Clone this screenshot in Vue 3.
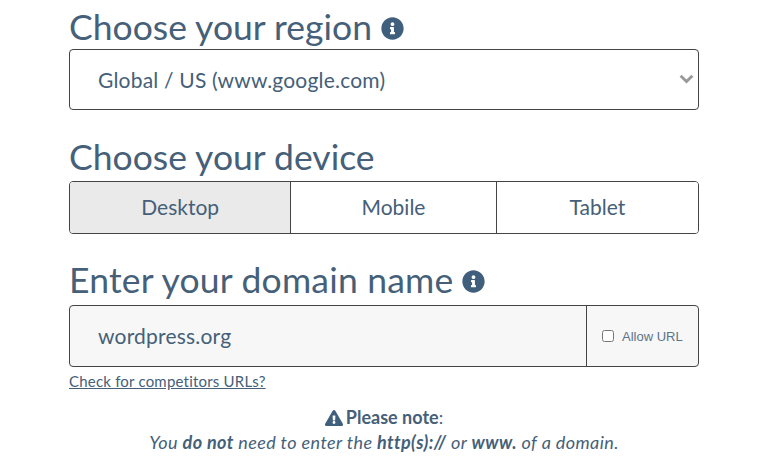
<script setup>
import { ref } from 'vue'
const devices = [
  { name: 'Desktop', grow: 221 },
  { name: 'Mobile', grow: 205 },
  { name: 'Tablet', grow: 202 }
]
const active = ref('Desktop')
const region = ref('Global / US (www.google.com)')
const domain = ref('wordpress.org')
</script>

<template>
  <main class="page">
    <h2 class="title first">
      Choose your region
      <svg class="info" viewBox="0 0 512 512"><path d="M256 8C119 8 8 119 8 256s111 248 248 248 248-111 248-248S393 8 256 8zm0 110c23 0 42 19 42 42s-19 42-42 42-42-19-42-42 19-42 42-42zm56 254c0 7-5 12-12 12h-88c-7 0-12-5-12-12v-24c0-7 5-12 12-12h12v-64h-12c-7 0-12-5-12-12v-24c0-7 5-12 12-12h64c7 0 12 5 12 12v100h12c7 0 12 5 12 12v24z"/></svg>
    </h2>
    <div class="select-wrap">
      <select v-model="region" class="select">
        <option>Global / US (www.google.com)</option>
      </select>
      <svg class="chevron" viewBox="0 0 14 9"><path d="M1.5 1.5 7 6.8l5.5-5.3" fill="none" stroke="#999" stroke-width="2.8"/></svg>
    </div>

    <h2 class="title second">Choose your device</h2>
    <div class="devices">
      <button
        v-for="d in devices"
        :key="d.name"
        class="device"
        :class="{ active: active === d.name }"
        :style="{ flexGrow: d.grow }"
        @click="active = d.name"
      >{{ d.name }}</button>
    </div>

    <h2 class="title third">
      Enter your domain name
      <svg class="info" viewBox="0 0 512 512"><path d="M256 8C119 8 8 119 8 256s111 248 248 248 248-111 248-248S393 8 256 8zm0 110c23 0 42 19 42 42s-19 42-42 42-42-19-42-42 19-42 42-42zm56 254c0 7-5 12-12 12h-88c-7 0-12-5-12-12v-24c0-7 5-12 12-12h12v-64h-12c-7 0-12-5-12-12v-24c0-7 5-12 12-12h64c7 0 12 5 12 12v100h12c7 0 12 5 12 12v24z"/></svg>
    </h2>
    <div class="domain">
      <input v-model="domain" class="domain-input" type="text" />
      <label class="allow"><input type="checkbox" class="check" /> Allow URL</label>
    </div>
    <a class="link" href="#">Check for competitors URLs?</a>

    <div class="note">
      <p class="note-head">
        <svg class="warn" viewBox="0 0 576 512"><path d="M570 440c18 32-5 72-42 72H48c-37 0-60-40-42-72L246 24c18-32 66-32 84 0l240 416zM288 354c-25 0-46 21-46 46s21 46 46 46 46-21 46-46-21-46-46-46zm-44-166 7 136c0 6 6 11 12 11h50c6 0 12-5 12-11l7-136c0-7-5-12-12-12h-64c-7 0-12 5-12 12z"/></svg>
        <strong>Please note</strong><span class="colon">:</span>
      </p>
      <p class="note-body">You <strong>do not</strong> need to enter the <strong>http(s)://</strong> or <strong>www.</strong> of a domain.</p>
    </div>
  </main>
</template>

<style scoped>
.page {
  width: 630px;
  margin-left: 69px;
  color: #456078;
  font-family: Lato, "Noto Sans", sans-serif;
}
.title {
  margin: 0;
  font-size: 35.5px;
  font-weight: 400;
  line-height: 40px;
  display: flex;
  align-items: center;
  gap: 9px;
  color: #456078;
  white-space: nowrap;
}
.first { padding-top: 4px; height: 49px; box-sizing: border-box; }
.first .info { margin-top: 3px; }
.second { margin-top: 27px; margin-bottom: 4px; height: 40px; }
.third { margin-top: 26px; margin-bottom: 5px; height: 40px; letter-spacing: 0.2px; }
.third .info { margin-top: 3px; }
.info { width: 23px; height: 23px; fill: #3f5f7d; flex: none; }
.select-wrap { position: relative; }
.select {
  display: block;
  width: 100%;
  height: 61px;
  box-sizing: border-box;
  appearance: none;
  background: #fff;
  border: 1px solid #444;
  border-radius: 4px;
  padding: 0 0 0 28px;
  color: #456078;
  font: 400 21px Lato, sans-serif;
  letter-spacing: 0.2px;
}
.chevron { position: absolute; right: 5px; top: 25px; width: 15px; height: 10px; }
.devices {
  display: flex;
  height: 53px;
  box-sizing: border-box;
  border: 1px solid #444;
  border-radius: 4px;
  overflow: hidden;
}
.device {
  flex: 1 1 0;
  border: 0;
  border-left: 1px solid #444;
  background: #fff;
  color: #456078;
  font: 400 21px Lato, sans-serif;
  padding: 0 0 3px;
}
.device:first-child { border-left: 0; }
.device.active { background: #eaeaea; }
.domain {
  display: flex;
  height: 62px;
  box-sizing: border-box;
  border: 1px solid #444;
  border-radius: 4px;
  background: #f7f7f7;
}
.domain-input {
  flex: 1;
  min-width: 0;
  border: 0;
  background: transparent;
  padding: 0 0 1px 28px;
  color: #456078;
  font: 400 21px Lato, sans-serif;
  letter-spacing: 0.2px;
  outline: none;
}
.allow {
  width: 112px;
  box-sizing: border-box;
  border-left: 1px solid #444;
  display: flex;
  align-items: center;
  padding-left: 15px;
  gap: 8px;
  font: 13px "Liberation Sans", sans-serif;
  color: #5d7387;
}
.check { margin: 0; width: 12px; height: 12px; }
.link {
  display: block;
  margin-top: 6px;
  font-size: 15px;
  line-height: 17px;
  letter-spacing: 0.2px;
  color: #456078;
}
.note { margin-top: 15px; text-align: center; font-size: 18px; }
.note p { margin: 0; line-height: 25px; }
.note-body { font-style: italic; letter-spacing: 0.4px; }
.note strong { font-weight: 700; }
.colon { font-weight: 400; }
.warn { width: 18px; height: 16px; fill: #3f5f7d; vertical-align: -2px; margin-right: 3px; }
</style>

<style>
html, body { margin: 0; background: #fff; overflow: hidden; }
</style>
